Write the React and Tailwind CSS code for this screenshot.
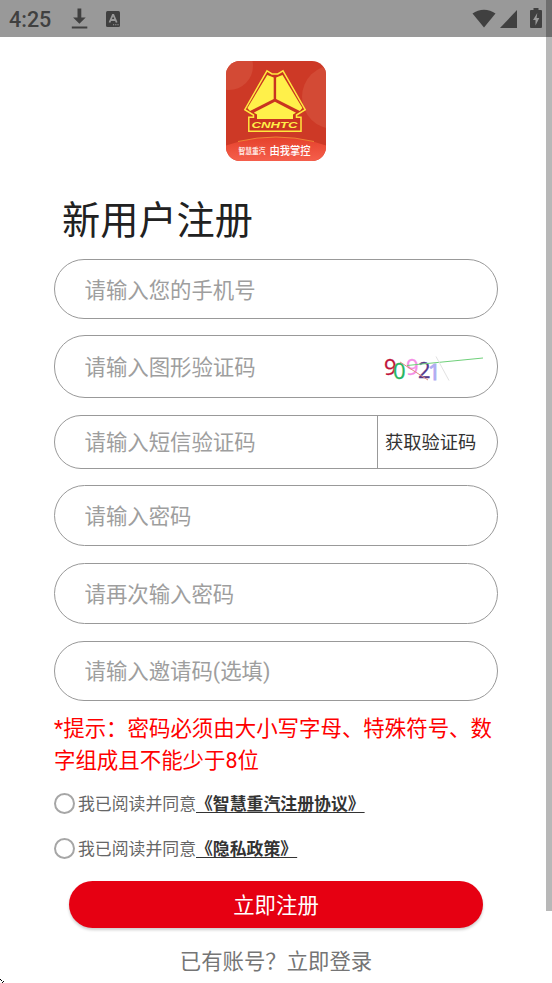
import React, { useState } from "react";

const StatusBar = () => {
    return (
        <div className="flex h-[37px] items-center justify-between bg-[#999999] pl-[9px] pr-[10px] text-[#404040]">
            <div className="flex items-center">
                <span className="w-[61px] pt-[2px] font-['Roboto'] text-[21.500px] font-medium leading-[37px]">4:25</span>
                {/* download */}
                <svg width="18" height="22" viewBox="0 0 18 22" className="mr-[18px]" fill="currentColor">
                    <path d="M7.500 0.500h3.800v9h4.400L9.400 15.800 3.100 9.500h4.400z" />
                    <rect x="1.800" y="18.500" width="15.500" height="2" />
                </svg>
                <svg width="14" height="16" viewBox="0 0 14 16" fill="currentColor">
                    <rect width="14" height="16" rx="1.500" />
                    <path d="M3.500 11.500 6.800 3.800h.6l3.300 7.700M4.700 9h4.800" fill="none" stroke="#999999" strokeWidth="1.800" />
                    <path d="M7 13.800h1.200m1 0h1.200m1 0h1.200" stroke="#999999" strokeWidth="1.100" />
                </svg>
            </div>
            <div className="flex items-center">
                {/* wifi */}
                <svg width="24" height="19" viewBox="0 0 24 19" fill="currentColor" className="mr-[4px]">
                    <path d="M.5 4.500C7-.6 17-.6 23.500 4.500L12 18.500z" />
                </svg>
                <svg width="17" height="18" viewBox="0 0 17 18" fill="currentColor" className="mr-[13px]">
                    <path d="M17 0v18H0z" />
                </svg>
                {/* battery */}
                <svg width="12" height="20" viewBox="0 0 12 20" fill="currentColor" className="mb-[1px]">
                    <path d="M3.500 0h5v2H11q1 0 1 1v16q0 1-1 1H1q-1 0-1-1V3q0-1 1-1h2.500z" />
                    <path d="M7.300 5 3 12h2.500v5.500L9.300 10H6.600z" fill="#999999" />
                </svg>
            </div>
        </div>
    );
};

const Logo = () => {
    return (
        <svg width="100" height="100" viewBox="0 0 100 100">
            <defs>
                <clipPath id="tile">
                    <rect width="100" height="100" rx="14" />
                </clipPath>
                <linearGradient id="band" x1="0" y1="0" x2="0" y2="1">
                    <stop offset="0" stopColor="#e5412b" />
                    <stop offset="1" stopColor="#f55f4c" />
                </linearGradient>
            </defs>
            <g clipPath="url(#tile)">
                <rect width="100" height="100" fill="#cd3926" />
                <circle cx="3" cy="5" r="24" fill="#d34a35" />
                <circle cx="108" cy="36" r="32" fill="#d34a35" />
                <path d="M0 84.500Q50 67.500 100 84.500V100H0z" fill="url(#band)" />
                <path d="M12 80.500Q50 71.500 88 80.500" fill="none" stroke="#f08a35" strokeWidth="0.900" />
                <path
                    d="M41 9.800 46 13H51.800L57 9.800 79.200 48.700 70.500 54V56.300H75V70.300H22.800V56.300H27.500V54L18.800 48.700z"
                    fill="#c93420"
                    stroke="#ffe83e"
                    strokeWidth="1.500"
                />
                <g fill="#fff04a">
                    <path d="M41.300 14 47.700 16.500V38L24 50 21.400 47z" />
                    <path d="M56.500 14 50.100 16.500V38L73.800 50 76.400 47z" />
                    <path d="M48.900 40.700 70 51.700 67 53.500V58H31V53.500L27.800 51.700z" />
                </g>
                <text x="25.500" y="67.300" textLength="46" lengthAdjust="spacingAndGlyphs" fill="#ffee48" className="font-['Liberation_Sans'] text-[9.500px] font-bold italic">CNHTC</text>
                <text x="12.500" y="92.500" textLength="27" lengthAdjust="spacingAndGlyphs" fill="#ffe9e4" className="font-['Noto_Sans_CJK_SC',sans-serif] text-[7.500px] font-bold">智慧重汽</text>
                <text x="43.500" y="94" textLength="41" lengthAdjust="spacingAndGlyphs" fill="#fff" className="font-['Noto_Sans_CJK_SC',sans-serif] text-[11.500px] font-medium">由我掌控</text>
            </g>
        </svg>
    );
};

// Captcha picture, each digit has its own colour and baseline
const Captcha = () => {
    return (
        <svg width="104" height="34" viewBox="0 0 104 34" className="font-['Open_Sans',sans-serif] text-[22px]">
            <text x="2" y="24.500" fill="#c0123a" stroke="#c0123a" strokeWidth="0.300">9</text>
            <text x="11" y="28.500" fill="#27b562" stroke="#27b562" strokeWidth="0.300">0</text>
            <text x="24" y="24.500" fill="#f58ee6" stroke="#f58ee6" strokeWidth="0.300">9</text>
            <text x="36" y="28" fill="#563a8c" stroke="#563a8c" strokeWidth="0.300">2</text>
            <text x="46" y="29.500" fill="#b0adf2" stroke="#b0adf2" strokeWidth="1">1</text>
            <path d="M25 15.500 101 8" stroke="#6fd07a" strokeWidth="1" />
            <path d="M18 12 46 30" stroke="#e08a80" strokeWidth="1" />
            <path d="M54 6.500 67 30.500" stroke="#e2e2e2" strokeWidth="1" />
        </svg>
    );
};

const Field = ({ placeholder, className, children }) => {
    return (
        <div className={`flex items-center overflow-hidden rounded-[31px] border border-[#999999] pl-[29.500px] ${className}`}>
            <input
                type="text"
                placeholder={placeholder}
                className="h-full min-w-0 flex-1 bg-transparent pt-[2px] text-[21.400px] text-[#333333] outline-none placeholder:text-[#9e9e9e]"
            />
            {children}
        </div>
    );
};

const Agreement = ({ title, className }) => {
    const [checked, setChecked] = useState(false);
    return (
        <div className={`flex h-[24px] items-center text-[16.860px] leading-[24px] text-[#666666] ${className}`}>
            <button
                className={`mr-[3px] size-[21px] shrink-0 rounded-full border-2 border-[#a6a6a6] ${checked ? "bg-[#e60012]" : "bg-white"}`}
                onClick={() => setChecked(!checked)}
            />
            <span className="pt-[1px]">我已阅读并同意</span>
            <a className="pt-[1px] font-bold text-[#333333] underline decoration-1 underline-offset-[2px]">{title}</a>
        </div>
    );
};

const App = () => {
    return (
        <div className="relative h-[983px] w-[552px] overflow-hidden bg-white font-['Roboto','Noto_Sans_CJK_SC',sans-serif]">
            <StatusBar />

            <div className="flex flex-col px-[54px]">
                <div className="mt-[24px] flex justify-center">
                    <Logo />
                </div>
                <h1 className="mt-[32px] pl-[8px] text-[38.200px] leading-[56px] text-[#212121]">新用户注册</h1>

                {/* Form */}
                <Field placeholder="请输入您的手机号" className="mt-[10px] h-[60px]" />
                <Field placeholder="请输入图形验证码" className="mt-[16px] h-[63px] pr-[11px]">
                    <Captcha />
                </Field>
                <Field placeholder="请输入短信验证码" className="mt-[17px] h-[53.500px]">
                    <button className="h-full w-[120px] border-l border-[#999999] pl-[7px] pt-[2px] text-left text-[18.300px] text-[#333333]">获取验证码</button>
                </Field>
                <Field placeholder="请输入密码" className="mt-[16.500px] h-[61px]" />
                <Field placeholder="请再次输入密码" className="mt-[17px] h-[61px]" />
                <Field placeholder="请输入邀请码(选填)" className="mt-[16.500px] h-[60px]" />

                <p className="mt-[12.500px] text-[21.450px] leading-[32px] text-[#ff0000]">
                    *提示：密码必须由大小写字母、特殊符号、数字组成且不能少于8位
                </p>

                <Agreement title="《智慧重汽注册协议》" className="mt-[14px]" />
                <Agreement title="《隐私政策》" className="mt-[21.500px]" />

                <button className="mx-[15px] mt-[20.500px] h-[47px] rounded-full bg-[#e60012] pt-[3px] text-[21.400px] text-white shadow-[0_2px_3px_rgba(0,0,0,0.2)]">
                    立即注册
                </button>
                <div className="mt-[17px] text-center text-[21.400px] leading-[34px] text-[#757575]">已有账号？立即登录</div>
            </div>

            {/* Scrollbar */}
            <div className="absolute right-0 top-0 h-[911px] w-[6px] bg-black/28" />
            <svg width="5" height="5" viewBox="0 0 5 5" className="absolute bottom-0 left-0" shapeRendering="crispEdges">
                <path d="M0 1h1v1H0zM1 2h1v1H1zM3 3h1v1H3zM2 4h1v1H2z" />
            </svg>
        </div>
    );
};

export default App;
